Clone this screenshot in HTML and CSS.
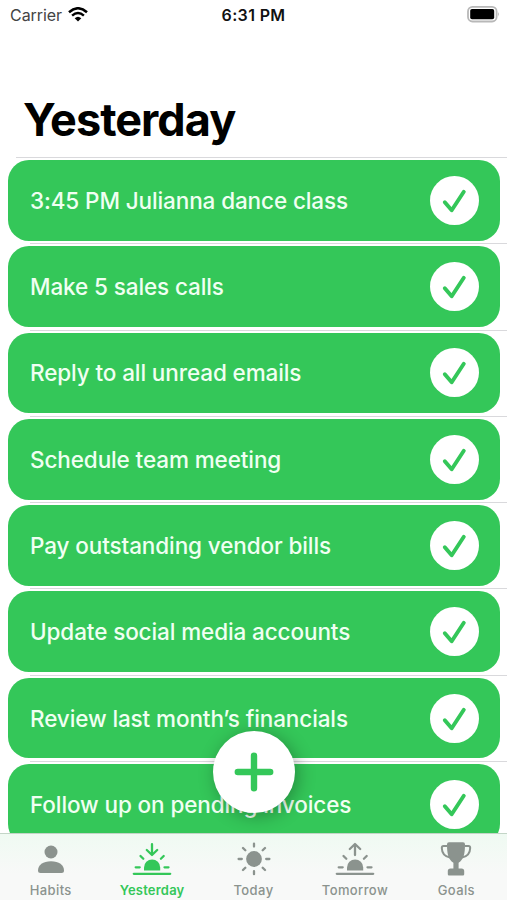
FILE: index.html
```html
<!DOCTYPE html>
<html lang="en">
<head>
    <meta charset="UTF-8">
    <meta name="viewport" content="width=device-width, initial-scale=1.0">
    <title>Yesterday</title>
    <link rel="stylesheet" href="styles.css">
</head>
<body>
    <!-- shared check icon -->
    <svg class="defs" width="0" height="0">
        <symbol id="check" viewBox="0 0 49 49">
            <circle cx="24.5" cy="24.5" r="24.5" fill="#fff"/>
            <path d="M14.8 26.2 L21.7 34.3 L33.8 15.8" fill="none" stroke="#34c759" stroke-width="3.9" stroke-linecap="round" stroke-linejoin="round"/>
        </symbol>
    </svg>

    <div class="screen">
        <div class="status-bar">
            <div class="carrier">
                <span>Carrier</span>
                <svg width="20" height="15" viewBox="0 0 20 15">
                    <g fill="none" stroke="#000" stroke-width="2.5">
                        <path d="M1 5.2 Q10 -2.7 19 5.2"/>
                        <path d="M4.1 8.6 Q10 3.4 15.9 8.6"/>
                    </g>
                    <path d="M6.7 11.2 Q10 8.2 13.3 11.2 L10 14.6 Z"/>
                </svg>
            </div>
            <div class="time">6:31 PM</div>
            <div class="battery">
                <svg width="33" height="17" viewBox="0 0 33 17">
                    <rect x="1" y="0.9" width="28.6" height="14.6" rx="4.5" fill="#fff" stroke="#b8b8b8" stroke-width="1.8"/>
                    <rect x="3.2" y="3" width="24" height="10.2" rx="1.8"/>
                    <path d="M31 6 Q32.8 8.2 31 10.5 Z" fill="#aaa"/>
                </svg>
            </div>
        </div>

        <h1>Yesterday</h1>

        <ul class="habits">
            <li><div class="card"><span>3:45 PM Julianna dance class</span><svg class="check"><use href="#check"/></svg></div></li>
            <li><div class="card"><span>Make 5 sales calls</span><svg class="check"><use href="#check"/></svg></div></li>
            <li><div class="card"><span>Reply to all unread emails</span><svg class="check"><use href="#check"/></svg></div></li>
            <li><div class="card"><span>Schedule team meeting</span><svg class="check"><use href="#check"/></svg></div></li>
            <li><div class="card"><span>Pay outstanding vendor bills</span><svg class="check"><use href="#check"/></svg></div></li>
            <li><div class="card"><span>Update social media accounts</span><svg class="check"><use href="#check"/></svg></div></li>
            <li><div class="card"><span>Review last month’s financials</span><svg class="check"><use href="#check"/></svg></div></li>
            <li><div class="card"><span>Follow up on pending invoices</span><svg class="check"><use href="#check"/></svg></div></li>
        </ul>

        <button class="add" aria-label="Add">
            <svg width="40" height="40" viewBox="0 0 40 40">
                <path d="M20 3.8 V36.2 M3.8 20 H36.2" stroke="#34c759" stroke-width="6.4" stroke-linecap="round"/>
            </svg>
        </button>

        <nav class="tab-bar">
            <a class="tab">
                <svg viewBox="0 0 40 36">
                    <circle cx="20" cy="12" r="6.5"/>
                    <path d="M7 30.5 C7 25 12 21.2 20 21.2 S33 25 33 30.5 Q33 33 30.5 33 H9.5 Q7 33 7 30.5 Z"/>
                </svg>
                <span>Habits</span>
            </a>
            <a class="tab active">
                <svg viewBox="0 0 40 36">
                    <path d="M12 30.5 V27.5 A8.1 8.1 0 0 1 28.2 27.5 V30.5 Z"/>
                    <g class="line">
                        <path d="M1.8 33.8 H38.2"/>
                        <path d="M20 4.2 V14.5 M14.8 10 L20 15 L25.2 10"/>
                        <path d="M3.7 27.3 H7.7 M32.5 27.3 H36.5 M8.5 16 L11.3 18.8 M31.7 16 L28.9 18.8"/>
                    </g>
                </svg>
                <span>Yesterday</span>
            </a>
            <a class="tab">
                <svg viewBox="0 0 40 36">
                    <circle cx="20" cy="19" r="7.9"/>
                    <g class="line">
                        <path d="M20 3.6 V6.6 M20 31.2 V34.2 M4.6 19 H7.8 M32.2 19 H35.4"/>
                        <path d="M9 8 L11.3 10.3 M31 8 L28.7 10.3 M9 30 L11.3 27.7 M31 30 L28.7 27.7"/>
                    </g>
                </svg>
                <span>Today</span>
            </a>
            <a class="tab">
                <svg viewBox="0 0 40 36">
                    <path d="M12 30.5 V27.5 A8.1 8.1 0 0 1 28.2 27.5 V30.5 Z"/>
                    <g class="line">
                        <path d="M1.8 33.8 H38.2"/>
                        <path d="M20 15 V4.5 M14.8 9 L20 4 L25.2 9"/>
                        <path d="M3.7 27.3 H7.7 M32.5 27.3 H36.5 M8.5 16 L11.3 18.8 M31.7 16 L28.9 18.8"/>
                    </g>
                </svg>
                <span>Tomorrow</span>
            </a>
            <a class="tab">
                <svg viewBox="0 0 40 36">
                    <path d="M11 4.2 Q11 2.2 13 2.2 H27 Q29 2.2 29 4.2 C29 14 27.7 19.4 22.6 22.7 V28.5 H25.5 Q28.2 28.5 28.2 31 V34.3 Q28.2 35.6 27 35.6 H13 Q11.8 35.6 11.8 34.3 V31 Q11.8 28.5 14.5 28.5 H17.4 V22.7 C12.3 19.4 11 14 11 4.2 Z"/>
                    <path d="M11 6 H7.5 Q5.8 6 5.8 8 Q6 16 14 17.5 M29 6 H32.5 Q34.2 6 34.2 8 Q34 16 26 17.5" fill="none" stroke="currentColor" stroke-width="2"/>
                </svg>
                <span>Goals</span>
            </a>
        </nav>
    </div>
</body>
</html>
```

FILE: styles.css
```css
* {
    box-sizing: border-box;
}
body {
    margin: 0;
    background: white;
    font-family: Inter, sans-serif;
}
.defs {
    position: absolute;
}
.screen {
    position: relative;
    display: flex;
    flex-direction: column;
    width: 507px;
    height: 900px;
    overflow: hidden;
}
.status-bar {
    display: grid;
    grid-template-columns: 1fr auto 1fr;
    align-items: center;
    height: 30px;
    padding: 0 7px 0 10px;
    font-size: 16px;
}
.carrier {
    display: flex;
    align-items: center;
    gap: 6px;
    color: #444;
    letter-spacing: -0.05px;
}
.carrier svg {
    margin-top: -2px;
}
.time {
    margin-right: 3px;
    font-weight: 600;
    color: #111;
    letter-spacing: 0.35px;
}
.battery {
    display: flex;
    justify-content: flex-end;
}
.battery svg {
    margin-top: -1px;
}
h1 {
    margin: 0;
    height: 127px;
    padding: 63px 0 0 23px;
    font-size: 45px;
    line-height: 54px;
    font-weight: 700;
    letter-spacing: -0.95px;
}
.habits {
    flex: 1;
    min-height: 0;
    overflow: hidden;
    margin: 0;
    padding: 0;
    list-style: none;
}
.habits li {
    position: relative;
    height: 86.3px;
    padding: 3px 7px 2.7px 8px;
}
.habits li::before {
    content: "";
    position: absolute;
    top: 0;
    left: 30px;
    right: 0;
    height: 1px;
    background: #d9d9dc;
}
.habits li:first-child::before {
    left: 16px;
}
.card {
    display: flex;
    align-items: center;
    justify-content: space-between;
    height: 100%;
    padding: 0 21px 0 22px;
    border-radius: 21px;
    background: #34c759;
    color: #f0fff2;
    font-size: 22.5px;
    font-weight: 500;
    letter-spacing: -0.11px;
    white-space: nowrap;
}
.check {
    width: 49px;
    height: 49px;
}
.add {
    position: absolute;
    left: 213px;
    top: 731px;
    z-index: 1;
    display: flex;
    align-items: center;
    justify-content: center;
    width: 82px;
    height: 82px;
    padding: 0;
    border: 0;
    border-radius: 50%;
    background: white;
    box-shadow: 3px 3px 18px rgba(0, 0, 0, 0.3);
}
.tab-bar {
    z-index: 2;
    display: flex;
    height: 67px;
    border-top: 1px solid #c3d5c7;
    background: linear-gradient(#effaf2, #f8f9f8 60%);
}
.tab {
    flex: 1;
    display: flex;
    flex-direction: column;
    align-items: center;
    padding-top: 6px;
    color: #8b938e;
    font-size: 13px;
    line-height: 18px;
    font-weight: 500;
    letter-spacing: 0.4px;
}
.tab svg {
    width: 40px;
    height: 36px;
    fill: currentColor;
}
.tab span {
    margin-top: 5px;
}
.tab .line {
    fill: none;
    stroke: currentColor;
    stroke-width: 2.3;
    stroke-linecap: round;
    stroke-linejoin: round;
}
.tab.active {
    color: #34c759;
}
.tab.active span {
    font-weight: 600;
    letter-spacing: 0.2px;
}
```
